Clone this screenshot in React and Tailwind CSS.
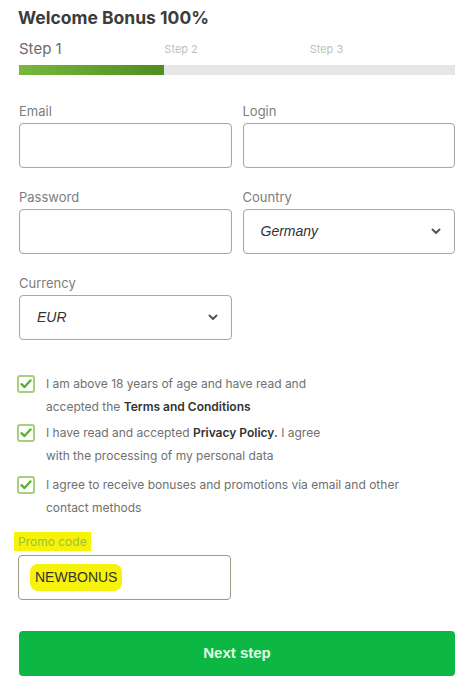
import React from "react";

const font = { fontFamily: "Inter, 'Noto Sans', sans-serif" };

function Field({ label, children }) {
  return (
    <div>
      <div className="text-[13px] leading-[17px] text-[#7d7d7d] h-[20px]">{label}</div>
      {children}
    </div>
  );
}

function Box({ children }) {
  return (
    <div className="h-[45px] rounded-[4px] border border-[#a8a8a8] bg-white flex items-center px-[17px] shadow-[inset_0_0_1px_rgba(0,0,0,0.15)]">
      {children}
    </div>
  );
}

function Select({ value }) {
  return (
    <Box>
      <span className="flex-1 italic text-[14px] text-[#333] font-['Liberation_Sans',Arial,sans-serif]">{value}</span>
      <svg width="10" height="7" viewBox="0 0 10 7" className="mr-[-4px]">
        <path d="M1.5 1.5 L5 5 L8.5 1.5" fill="none" stroke="#555" strokeWidth="2" strokeLinecap="round" strokeLinejoin="round" />
      </svg>
    </Box>
  );
}

function Check({ children }) {
  return (
    <div className="flex items-start">
      <div className="w-[18px] h-[18px] mt-[3px] rounded-[3px] border-2 border-[#a6d07c] bg-white flex items-center justify-center shrink-0">
        <svg width="12" height="10" viewBox="0 0 12 10">
          <path d="M1.5 5.2 L4.5 8 L10.5 1.5" fill="none" stroke="#5fae37" strokeWidth="2.4" strokeLinecap="round" strokeLinejoin="round" />
        </svg>
      </div>
      <div className="ml-[11px] text-[12px] leading-[23px] text-[#707070]">{children}</div>
    </div>
  );
}

export default function App() {
  return (
    <div className="w-[468px] h-[680px] bg-white overflow-hidden pl-[19px] pr-[13px]" style={font}>
      <div className="pt-[6px] text-[17.5px] leading-[24px] font-bold text-[#3c3c3c] ml-[-1px]">Welcome Bonus 100%</div>
      <div className="grid grid-cols-3 mt-[8px] h-[20px] items-center">
        <div className="text-[15px] text-[#6b6b6b]">Step 1</div>
        <div className="text-[11px] text-[#bdbdbd]">Step 2</div>
        <div className="text-[11px] text-[#bdbdbd]">Step 3</div>
      </div>
      <div className="mt-[7px] h-[10px] bg-[#e6e6e6] flex">
        <div className="w-[145px] h-full bg-gradient-to-r from-[#78b83a] to-[#4f8c22]" />
      </div>

      <div className="grid grid-cols-2 gap-x-[11px] gap-y-[21px] mt-[28px]">
        <Field label="Email"><Box /></Field>
        <Field label="Login"><Box /></Field>
        <Field label="Password"><Box /></Field>
        <Field label="Country"><Select value="Germany" /></Field>
        <Field label="Currency"><Select value="EUR" /></Field>
      </div>

      <div className="mt-[32px] flex flex-col gap-[3px] ml-[-2px]">
        <Check>
          I am above 18 years of age and have read and<br />
          accepted the <span className="font-semibold text-[#333]">Terms and Conditions</span>
        </Check>
        <Check>
          I have read and accepted <span className="font-semibold text-[#333]">Privacy Policy.</span> I agree<br />
          with the processing of my personal data
        </Check>
        <div className="mt-[3px]">
          <Check>
            I agree to receive bonuses and promotions via email and other<br />
            contact methods
          </Check>
        </div>
      </div>

      <div className="mt-[13px] ml-[-5px] flex">
        <div className="bg-[#f7f20a] px-[4px] text-[12px] leading-[19px] text-[#9ac23a]">Promo code</div>
      </div>
      <div className="w-[213px] ml-[-1px] mt-[4px] h-[45px] rounded-[4px] border border-[#9a9a8a] bg-white flex items-center px-[11px]">
        <span className="bg-[#f7f20a] rounded-[8px] px-[5px] py-[3px] text-[14px] text-[#333] font-['Liberation_Sans',Arial,sans-serif]">NEWBONUS</span>
      </div>

      <button className="mt-[31px] w-full h-[45px] rounded-[4px] bg-[#0cb843] text-[#e3fbe3] text-[15px] font-bold font-['Liberation_Sans',Arial,sans-serif] block">
        Next step
      </button>
    </div>
  );
}
